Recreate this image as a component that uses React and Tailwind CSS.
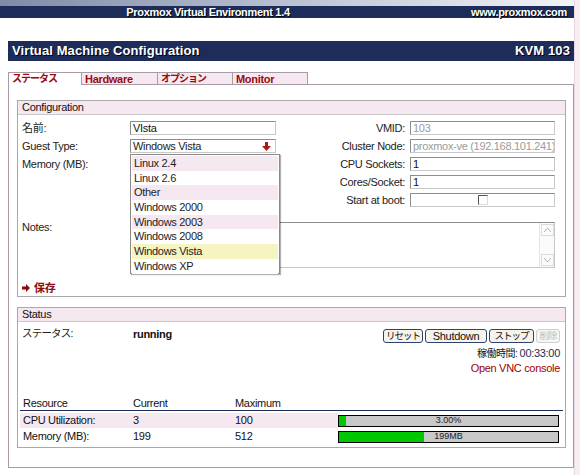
import React from 'react';

const FONT = { fontFamily: '"Liberation Sans", Arial, "Noto Sans CJK JP", sans-serif' };

const Input = ({ value, disabled, className = '' }) => (
  <div
    className={`h-[14px] border border-[#8d8d8d] border-b-[#c8c8c8] border-r-[#c8c8c8] bg-white px-[2px] leading-[12px] overflow-hidden whitespace-nowrap ${disabled ? 'text-[#9a9a9a]' : 'text-[#111]'} ${className}`}
  >
    {value}
  </div>
);

const guestTypes = [
  { label: 'Linux 2.4', bg: 'bg-[#f6e8f0]' },
  { label: 'Linux 2.6', bg: 'bg-white' },
  { label: 'Other', bg: 'bg-[#f6e8f0]' },
  { label: 'Windows 2000', bg: 'bg-white' },
  { label: 'Windows 2003', bg: 'bg-[#f6e8f0]' },
  { label: 'Windows 2008', bg: 'bg-white' },
  { label: 'Windows Vista', bg: 'bg-[#f6f5c2]' },
  { label: 'Windows XP', bg: 'bg-white' },
];

const Fieldset = ({ title, children, className = '' }) => (
  <div className={`border border-[#a9a9a9] ${className}`}>
    <div className="h-[14px] bg-[#f6e8f0] border-b border-[#c9c9c9] px-[4px] leading-[13px] text-[#111]">{title}</div>
    {children}
  </div>
);

const Button = ({ children, disabled, jp, className = '' }) => (
  <div
    className={`h-[14px] rounded-[3px] border flex items-center justify-center leading-none whitespace-nowrap ${jp ? 'text-[9.5px] tracking-[-1px]' : ''} ${disabled ? 'border-[#cfcfcf] text-[#c0c0c0] bg-[#f6f6f2]' : 'border-[#2c4370] text-[#111] bg-[#f5f3ea]'} ${className}`}
  >
    {children}
  </div>
);

const Bar = ({ pct, label }) => (
  <div className="relative w-[221px] h-[12px] border border-black bg-[#c8c8c8]">
    <div className="h-full bg-[#00c800]" style={{ width: `${pct}%` }} />
    <div className="absolute inset-0 flex items-center justify-center text-[9px] text-[#222] leading-none tracking-normal">{label}</div>
  </div>
);

export default function App() {
  return (
    <div style={FONT} className="w-[580px] h-[475px] overflow-hidden bg-white text-[11px] tracking-[-0.3px] text-[#222] flex">
      <div className="w-[574px] flex flex-col">
        {/* top banner */}
        <div className="h-[6px] bg-gradient-to-r from-[#7f8ca8] via-[#b9c1d2] to-[#f4f4f8]" />
        <div className="h-[12px] bg-[#1e2c5a] text-white font-bold text-[11px] leading-[12px] flex items-center [text-shadow:1px_1px_0_#000]">
          <div className="w-[416px] text-center">Proxmox Virtual Environment 1.4</div>
          <div className="flex-1 text-right pr-[7px]">www.proxmox.com</div>
        </div>

        {/* title */}
        <div className="ml-[8px] mt-[23px] h-[20px] bg-[#1e2c5a] text-white font-bold text-[13px] tracking-[0.1px] flex items-center justify-between px-[4px] [text-shadow:1px_1px_0_#000]">
          <span>Virtual Machine Configuration</span>
          <span>KVM 103</span>
        </div>

        {/* tabs */}
        <div className="ml-[8px] mt-[11px] h-[13px] flex border-b border-[#a89aa8] font-bold text-[#9b0a0a]">
          <div className="w-[74px] h-[13px] border border-b-0 border-[#a89aa8] bg-white pl-[3px] leading-[12px] text-[10px] tracking-[-1px]">ステータス</div>
          <div className="w-[76px] h-[12px] border-t border-r border-[#a89aa8] bg-[#f6e8f0] pl-[3px] leading-[12px]">Hardware</div>
          <div className="w-[75px] h-[12px] border-t border-r border-[#a89aa8] bg-[#f6e8f0] pl-[3px] leading-[12px] text-[10px] tracking-[-1px]">オプション</div>
          <div className="w-[75px] h-[12px] border-t border-r border-[#a89aa8] bg-[#f6e8f0] pl-[3px] leading-[12px]">Monitor</div>
        </div>

        {/* panel */}
        <div className="ml-[8px] h-[383px] border-l border-r border-b border-[#a89aa8] pl-[8px] pr-[7px] pt-[15px]">
          <Fieldset title="Configuration" className="h-[197px]">
            <div className="pt-[4px]">
              {/* row 1 */}
              <div className="h-[18px] flex items-center">
                <div className="w-[112px] pl-[4px]">名前:</div>
                <Input value="VIsta" className="w-[146px]" />
                <div className="w-[134px] pr-[5px] text-right">VMID:</div>
                <Input value="103" disabled className="w-[145px]" />
              </div>
              {/* row 2 */}
              <div className="h-[18px] flex items-center">
                <div className="w-[112px] pl-[4px]">Guest Type:</div>
                <div className="relative w-[146px]">
                  <div className="h-[14px] border border-[#8d8d8d] border-b-[#c8c8c8] border-r-[#c8c8c8] bg-white px-[2px] leading-[12px] flex justify-between items-center">
                    <span>Windows Vista</span>
                    <svg width="9" height="9" viewBox="0 0 9 9" className="mr-[2px]">
                      <path d="M3 0h3v4h3L4.5 9 0 4h3z" fill="#b01818" />
                    </svg>
                  </div>
                  <div className="absolute left-0 top-[15px] w-[150px] h-[120px] z-10 bg-white border border-[#8a8a8a] shadow-[1px_1px_1px_rgba(0,0,0,0.3)] px-[1px] pt-[1px]">
                    {guestTypes.map((g) => (
                      <div key={g.label} className={`h-[14.7px] leading-[14px] pl-[2px] ${g.bg}`}>{g.label}</div>
                    ))}
                  </div>
                </div>
                <div className="w-[134px] pr-[5px] text-right">Cluster Node:</div>
                <Input value="proxmox-ve (192.168.101.241)" disabled className="w-[145px]" />
              </div>
              {/* row 3 */}
              <div className="h-[18px] flex items-center">
                <div className="w-[112px] pl-[4px]">Memory (MB):</div>
                <div className="w-[146px]" />
                <div className="w-[134px] pr-[5px] text-right">CPU Sockets:</div>
                <Input value="1" className="w-[145px]" />
              </div>
              {/* row 4 */}
              <div className="h-[18px] flex items-center">
                <div className="w-[258px]" />
                <div className="w-[134px] pr-[5px] text-right">Cores/Socket:</div>
                <Input value="1" className="w-[145px]" />
              </div>
              {/* row 5 */}
              <div className="h-[18px] flex items-center">
                <div className="w-[258px]" />
                <div className="w-[134px] pr-[5px] text-right">Start at boot:</div>
                <div className="w-[145px] h-[14px] border border-[#8d8d8d] border-b-[#c8c8c8] border-r-[#c8c8c8] bg-white flex items-center justify-center">
                  <div className="w-[10px] h-[10px] border-t border-l border-[#555] border-b border-r border-b-[#ddd] border-r-[#ddd]" />
                </div>
              </div>
              {/* notes */}
              <div className="flex mt-[13px]">
                <div className="w-[112px] pl-[4px] leading-[10px]">Notes:</div>
                <div className="w-[425px] h-[46px] border border-[#8d8d8d] border-b-[#c8c8c8] border-r-[#c8c8c8] bg-white flex justify-end">
                  <div className="w-[15px] h-full border-l border-[#e4e4e4] bg-[#fbfbfb] flex flex-col justify-between items-center py-[1px]">
                    <div className="w-[13px] h-[12px] border border-[#dcdcdc] flex items-center justify-center">
                      <svg width="7" height="4" viewBox="0 0 7 4"><path d="M0 4L3.5 0 7 4" stroke="#b0b0b0" fill="none" /></svg>
                    </div>
                    <div className="w-[13px] h-[12px] border border-[#dcdcdc] flex items-center justify-center">
                      <svg width="7" height="4" viewBox="0 0 7 4"><path d="M0 0L3.5 4 7 0" stroke="#b0b0b0" fill="none" /></svg>
                    </div>
                  </div>
                </div>
              </div>
              {/* save */}
              <div className="mt-[12px] pl-[4px] flex items-center gap-[4px] text-[#8b0c0c] font-bold">
                <svg width="8" height="8" viewBox="0 0 8 8"><path d="M0 2.5h4V0l4 4-4 4V5.5H0z" fill="#8b0c0c" /></svg>
                <span>保存</span>
              </div>
            </div>
          </Fieldset>

          <Fieldset title="Status" className="mt-[10px] h-[141px]">
            <div className="flex h-[75px] pt-[4px]">
              <div className="flex items-start pl-[4px]">
                <div className="w-[111px] text-[10.5px] tracking-[-0.8px]">ステータス:</div>
                <div className="font-bold text-[#111]">running</div>
              </div>
              <div className="flex-1 flex flex-col items-end pr-[5px]">
                <div className="flex gap-[2px] mt-[3px]">
                  <Button jp className="w-[40px]">リセット</Button>
                  <Button className="w-[62px]">Shutdown</Button>
                  <Button jp className="w-[45px]">ストップ</Button>
                  <Button jp disabled className="w-[24px]">削除</Button>
                </div>
                <div className="mt-[3px] h-[14px] leading-[14px]">
                  <span className="text-[#111] text-[10px] tracking-[-0.5px]">稼働時間: </span>
                  <span className="text-[#1e2c5a]">00:33:00</span>
                </div>
                <div className="h-[16px] leading-[16px] text-[#a00000]">Open VNC console</div>
              </div>
            </div>
            <div className="mx-[2px]">
              <div className="h-[14px] flex items-center border-b border-[#1e2c5a] text-[#111]">
                <div className="w-[113px] pl-[3px]">Resource</div>
                <div className="w-[102px]">Current</div>
                <div className="w-[103px]">Maximum</div>
              </div>
              <div className="mt-[2px] h-[15px] flex items-center text-[#111]">
                <div className="w-[318px] h-full bg-[#f6e8f0] flex items-center">
                  <div className="w-[113px] pl-[3px]">CPU Utilization:</div>
                  <div className="w-[102px]">3</div>
                  <div className="w-[103px]">100</div>
                </div>
                <Bar pct={3} label="3.00%" />
              </div>
              <div className="mt-[1px] h-[15px] flex items-center text-[#111]">
                <div className="w-[318px] flex items-center">
                  <div className="w-[113px] pl-[3px]">Memory (MB):</div>
                  <div className="w-[102px]">199</div>
                  <div className="w-[103px]">512</div>
                </div>
                <Bar pct={38.9} label="199MB" />
              </div>
            </div>
          </Fieldset>
        </div>
      </div>
      <div className="flex-1 bg-[#f8eff5] border-l border-[#e6d6e2]" />
    </div>
  );
}
